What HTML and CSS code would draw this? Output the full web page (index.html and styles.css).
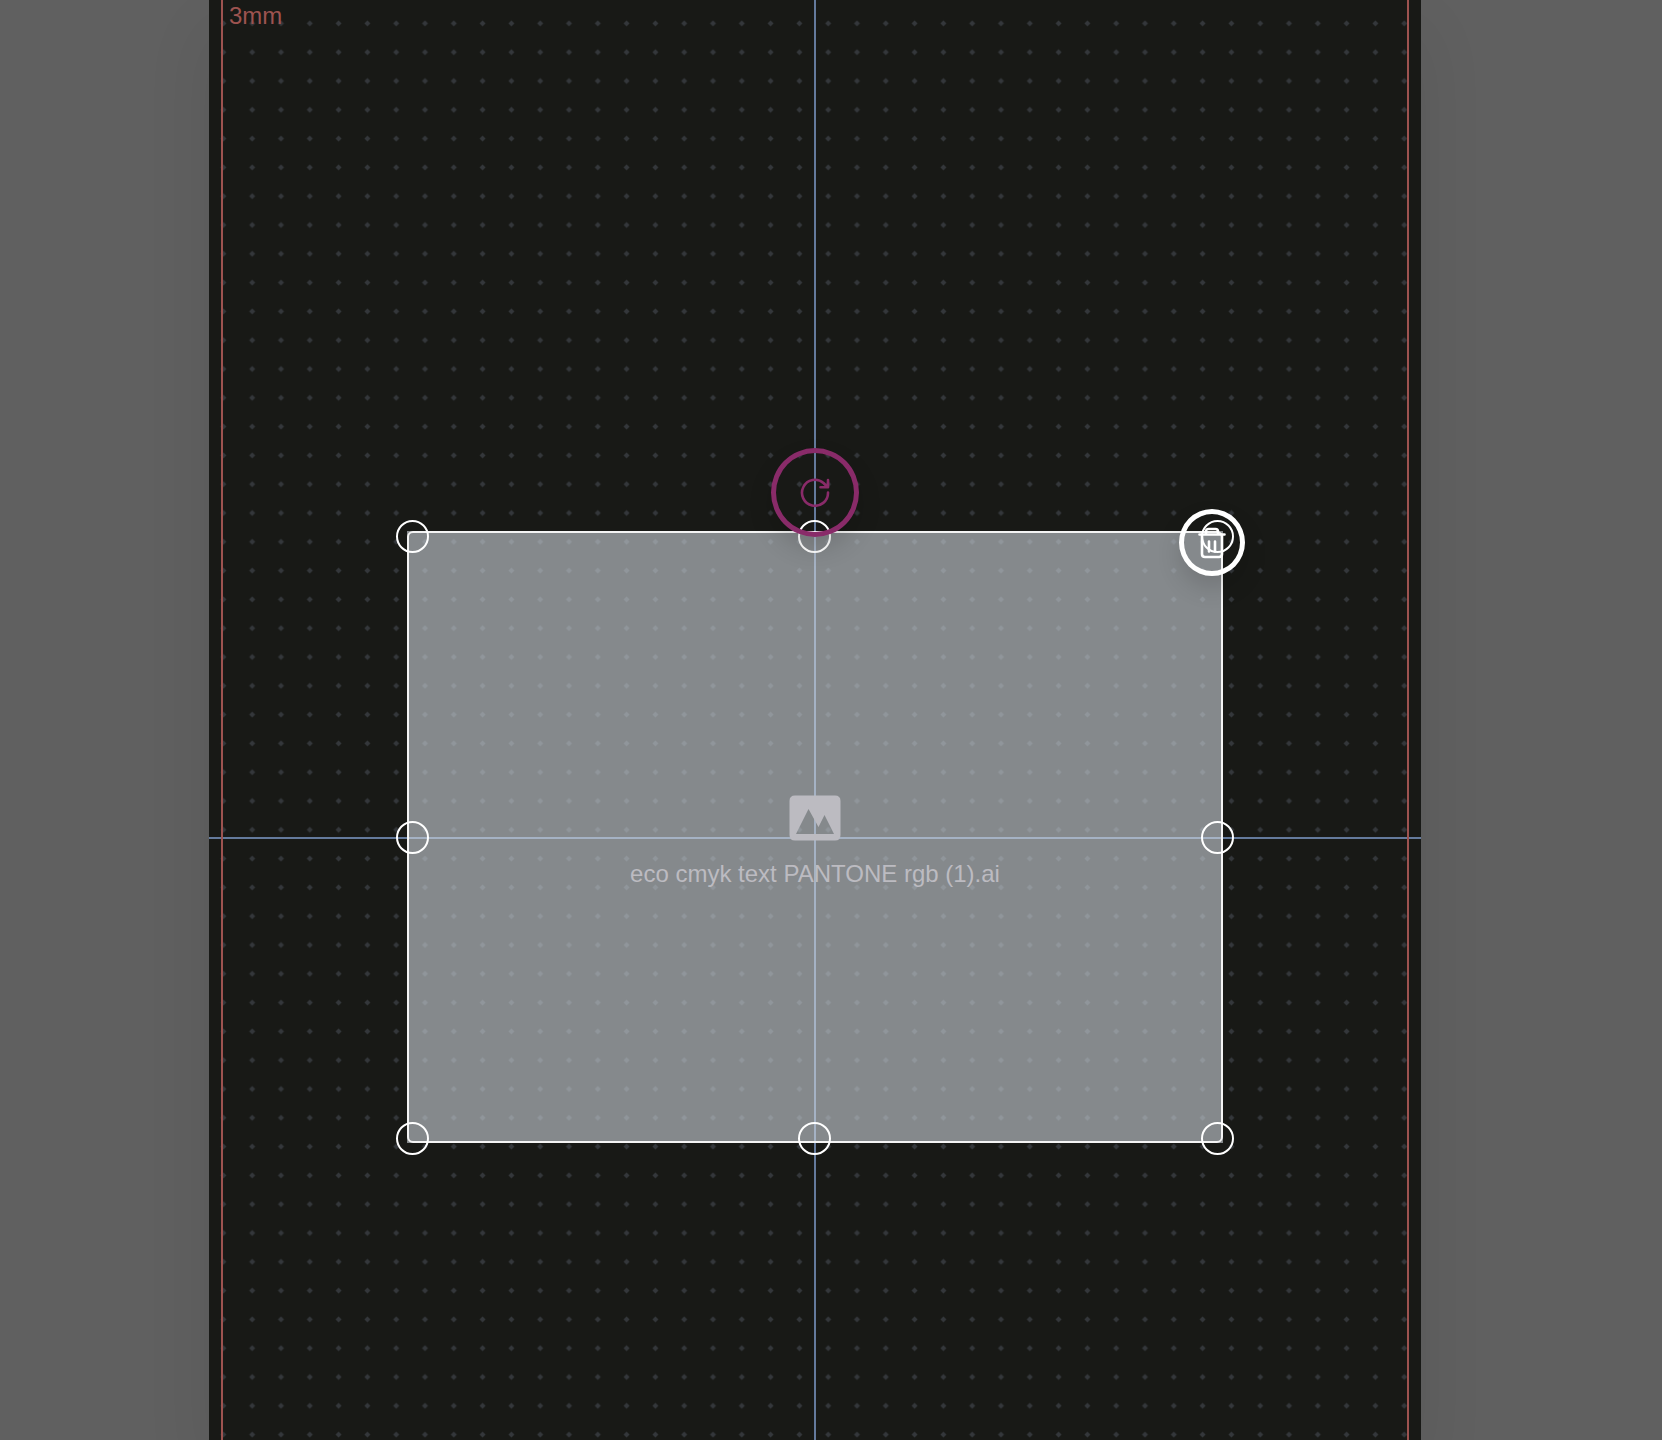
FILE: index.html
```html
<!DOCTYPE html>
<html lang="en">
<head>
<meta charset="utf-8">
<meta name="viewport" content="width=device-width, initial-scale=1">
<title>Artwork editor</title>
<link rel="stylesheet" href="styles.css">
</head>
<body>
<main class="workspace">
  <section class="artboard" aria-label="Artboard">
    <svg class="dots" width="100%" height="100%" aria-hidden="true">
      <defs>
        <pattern id="grid" x="0" y="9" width="28.8" height="28.8" patternUnits="userSpaceOnUse">
          <path d="M14.4 11.4 L17.4 14.4 L14.4 17.4 L11.4 14.4 Z" fill="#34373b"/>
        </pattern>
      </defs>
      <rect width="100%" height="100%" fill="url(#grid)"/>
    </svg>
    <span class="bleed-label">3mm</span>
    <div class="guide guide-v"></div>
    <div class="guide guide-h"></div>

    <div class="selection">
      <div class="placeholder">
        <svg class="picture" viewBox="0 0 52 46" aria-hidden="true">
          <path fill-rule="evenodd" fill="#bcbbc1" d="M6 0.500H46Q51.500 0.500 51.500 6V40Q51.500 45.500 46 45.500H6Q0.500 45.500 0.500 40V6Q0.500 0.500 6 0.500ZM7 39H45L35.500 20L29.500 32L19.500 14Z"/>
        </svg>
        <span class="file-name">eco cmyk text PANTONE rgb (1).ai</span>
      </div>
      <button class="handle north west" aria-label="Resize top left"></button>
      <button class="handle north center" aria-label="Resize top"></button>
      <button class="handle north east" aria-label="Resize top right"></button>
      <button class="handle middle west" aria-label="Resize left"></button>
      <button class="handle middle east" aria-label="Resize right"></button>
      <button class="handle south west" aria-label="Resize bottom left"></button>
      <button class="handle south center" aria-label="Resize bottom"></button>
      <button class="handle south east" aria-label="Resize bottom right"></button>
      <button class="tool rotate" aria-label="Rotate">
        <svg width="30" height="30" viewBox="0 0 30 30" fill="none" stroke="currentColor" stroke-width="2.600" stroke-linecap="round" stroke-linejoin="round">
          <path d="M28 14.500A13 13 0 1 1 23.500 5L27.500 9M28 2V9.300H20.500"/>
        </svg>
      </button>
      <button class="tool delete" aria-label="Delete">
        <svg width="28" height="32" viewBox="0 0 28 32" fill="none" stroke="currentColor" stroke-width="2.600" stroke-linecap="round" stroke-linejoin="round">
          <path d="M1.500 7.500H26.500M4 7.500V27Q4 30 7 30H21Q24 30 24 27V7.500M8 7V4.500Q8 2 10.500 2H17.500Q20 2 20 4.500V7M11 14.500V24.500M17 14.500V24.500"/>
        </svg>
      </button>
    </div>
  </section>
</main>
</body>
</html>
```
FILE: styles.css
```css
* {
  box-sizing: border-box;
}

body {
  margin: 0;
  background: #606060;
  font-family: "Liberation Sans", Arial, sans-serif;
  font-size: 24px;
  line-height: 28px;
}

.workspace {
  display: flex;
  min-height: 100vh;
  padding: 0 241px 0 209px;
  overflow: hidden;
}

.artboard {
  position: relative;
  flex: 1;
  padding: 531px 198px 200px;
  background: #181916;
  box-shadow: 0 32px 64px rgba(0, 0, 0, 0.08);
}

.artboard::after {
  content: "";
  position: absolute;
  inset: 0 12px;
  border: solid #9d5350;
  border-width: 0 2px;
  pointer-events: none;
}

.dots {
  position: absolute;
  inset: 0;
}

.bleed-label {
  position: absolute;
  top: 2px;
  left: 20px;
  color: #9d5350;
}

.guide {
  position: absolute;
  background: #647a9c;
}

.guide-v {
  top: 0;
  bottom: 0;
  left: calc(50% - 1px);
  width: 2px;
}

.guide-h {
  top: 837px;
  left: 0;
  right: 0;
  height: 2px;
}

.selection {
  position: relative;
  height: 612px;
  background: rgba(212, 218, 225, 0.58);
}

.selection::before {
  content: "";
  position: absolute;
  inset: 0;
  border: 2px solid #f4f4f4;
  border-radius: 6px;
}

.placeholder {
  display: flex;
  flex-direction: column;
  align-items: center;
  gap: 19px;
  padding-top: 264px;
}

.picture {
  width: 52px;
  height: 46px;
}

.file-name {
  color: #bcbbc1;
}

button {
  padding: 0;
  background: transparent;
}

.handle {
  position: absolute;
  width: 33px;
  height: 33px;
  border: 2px solid #fff;
  border-radius: 50%;
}

.north { top: -11px; }
.middle { top: 290px; }
.south { bottom: -12px; }
.west { left: -11px; }
.center { left: calc(50% - 17px); }
.east { right: -11px; }

.tool {
  position: absolute;
  display: flex;
  align-items: center;
  justify-content: center;
  border: 5px solid currentColor;
  border-radius: 50%;
  box-shadow: 0 12px 24px rgba(0, 0, 0, 0.14);
}

.rotate {
  top: -83px;
  left: calc(50% - 44px);
  width: 88px;
  height: 89px;
  color: #892b69;
}

.delete {
  top: -22px;
  right: -22px;
  width: 66px;
  height: 67px;
  color: #fff;
}
```
